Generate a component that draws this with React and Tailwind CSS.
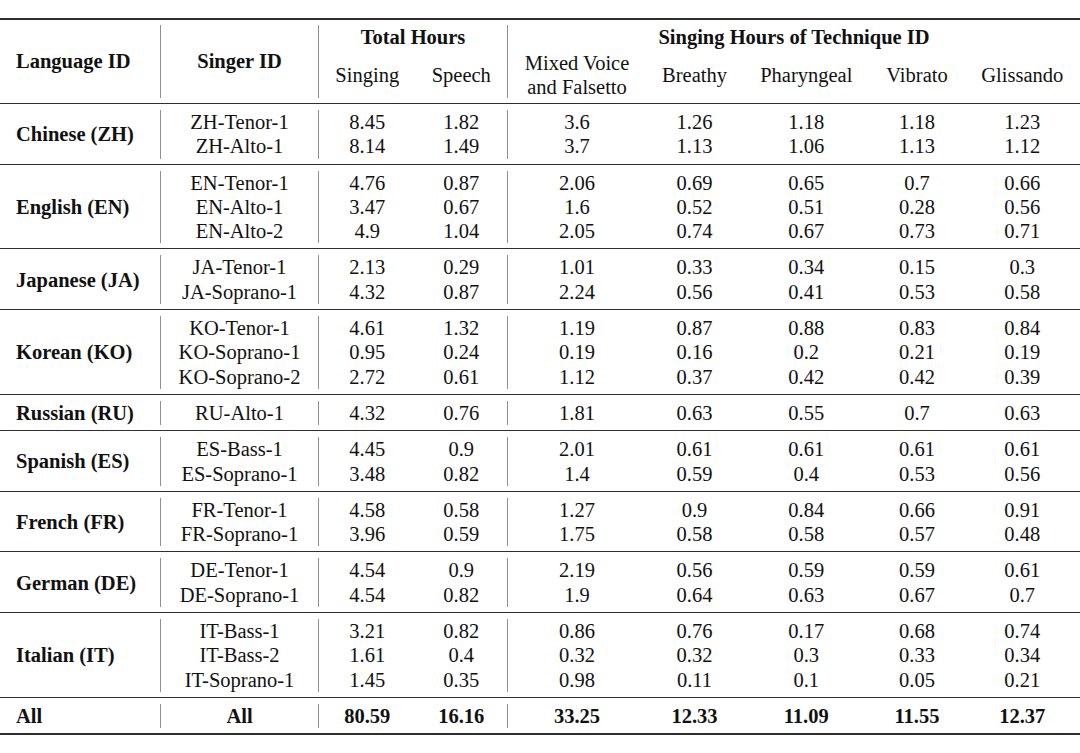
import React from "react";

// Hours per language / singer, split by technique
const groups = [
    {
        lang: "Chinese (ZH)",
        rows: [
            ["ZH-Tenor-1", "8.45", "1.82", "3.6", "1.26", "1.18", "1.18", "1.23"],
            ["ZH-Alto-1", "8.14", "1.49", "3.7", "1.13", "1.06", "1.13", "1.12"],
        ],
    },
    {
        lang: "English (EN)",
        rows: [
            ["EN-Tenor-1", "4.76", "0.87", "2.06", "0.69", "0.65", "0.7", "0.66"],
            ["EN-Alto-1", "3.47", "0.67", "1.6", "0.52", "0.51", "0.28", "0.56"],
            ["EN-Alto-2", "4.9", "1.04", "2.05", "0.74", "0.67", "0.73", "0.71"],
        ],
    },
    {
        lang: "Japanese (JA)",
        rows: [
            ["JA-Tenor-1", "2.13", "0.29", "1.01", "0.33", "0.34", "0.15", "0.3"],
            ["JA-Soprano-1", "4.32", "0.87", "2.24", "0.56", "0.41", "0.53", "0.58"],
        ],
    },
    {
        lang: "Korean (KO)",
        rows: [
            ["KO-Tenor-1", "4.61", "1.32", "1.19", "0.87", "0.88", "0.83", "0.84"],
            ["KO-Soprano-1", "0.95", "0.24", "0.19", "0.16", "0.2", "0.21", "0.19"],
            ["KO-Soprano-2", "2.72", "0.61", "1.12", "0.37", "0.42", "0.42", "0.39"],
        ],
    },
    {
        lang: "Russian (RU)",
        rows: [["RU-Alto-1", "4.32", "0.76", "1.81", "0.63", "0.55", "0.7", "0.63"]],
    },
    {
        lang: "Spanish (ES)",
        rows: [
            ["ES-Bass-1", "4.45", "0.9", "2.01", "0.61", "0.61", "0.61", "0.61"],
            ["ES-Soprano-1", "3.48", "0.82", "1.4", "0.59", "0.4", "0.53", "0.56"],
        ],
    },
    {
        lang: "French (FR)",
        rows: [
            ["FR-Tenor-1", "4.58", "0.58", "1.27", "0.9", "0.84", "0.66", "0.91"],
            ["FR-Soprano-1", "3.96", "0.59", "1.75", "0.58", "0.58", "0.57", "0.48"],
        ],
    },
    {
        lang: "German (DE)",
        rows: [
            ["DE-Tenor-1", "4.54", "0.9", "2.19", "0.56", "0.59", "0.59", "0.61"],
            ["DE-Soprano-1", "4.54", "0.82", "1.9", "0.64", "0.63", "0.67", "0.7"],
        ],
    },
    {
        lang: "Italian (IT)",
        rows: [
            ["IT-Bass-1", "3.21", "0.82", "0.86", "0.76", "0.17", "0.68", "0.74"],
            ["IT-Bass-2", "1.61", "0.4", "0.32", "0.32", "0.3", "0.33", "0.34"],
            ["IT-Soprano-1", "1.45", "0.35", "0.98", "0.11", "0.1", "0.05", "0.21"],
        ],
    },
    {
        lang: "All",
        bold: true,
        rows: [["All", "80.59", "16.16", "33.25", "12.33", "11.09", "11.55", "12.37"]],
    },
];

// widths of the data columns after the language column
const colClass = [
    "w-[158px] border-r border-[#8f8f8f]",
    "w-[96.5px]",
    "w-[92.5px] border-r border-[#8f8f8f]",
    "w-[138px]",
    "w-[97px]",
    "w-[126.5px]",
    "w-[95px]",
    "w-[115.5px]",
];

function Group({ lang, rows, bold }) {
    return (
        <div className="pt-[6px] pb-[5px]">
            <div className="flex">
                <div className="w-[161px] shrink-0 border-r border-[#8f8f8f] pl-4 flex items-center font-bold">
                    {lang}
                </div>
                {colClass.map((cls, j) => (
                    <div
                        key={j}
                        className={`${cls} shrink-0 flex flex-col text-center ${
                            bold ? "font-bold" : ""
                        }`}
                    >
                        {rows.map((r, i) => (
                            <div key={i} className="h-[24.3px]">
                                {r[j]}
                            </div>
                        ))}
                    </div>
                ))}
            </div>
        </div>
    );
}

export default function App() {
    return (
        <div className="min-h-screen w-[1080px] bg-white pt-[18px] text-[#111] text-[20.5px] leading-[24.3px] font-['Liberation_Serif','Times_New_Roman',serif]">
            <div className="h-[2px] bg-[#2e2e2e]" />

            <div className="pt-[5px] pb-[5px]">
                <div className="flex">
                    <div className="w-[161px] shrink-0 border-r border-[#8f8f8f] pl-4 flex items-center font-bold">
                        Language ID
                    </div>
                    <div className="w-[158px] shrink-0 border-r border-[#8f8f8f] flex items-center justify-center font-bold">
                        Singer ID
                    </div>
                    <div className="w-[189px] shrink-0 border-r border-[#8f8f8f] flex flex-col">
                        <div className="h-[25px] leading-[25px] text-center font-bold">
                            Total Hours
                        </div>
                        <div className="h-[48px] flex items-center pt-[2px]">
                            <div className="w-[96.5px] text-center">Singing</div>
                            <div className="w-[91.5px] text-center">Speech</div>
                        </div>
                    </div>
                    <div className="w-[572px] shrink-0 flex flex-col">
                        <div className="h-[25px] leading-[25px] text-center font-bold">
                            Singing Hours of Technique ID
                        </div>
                        <div className="h-[48px] flex items-center pt-[2px]">
                            <div className="w-[138px] text-center leading-[24px]">
                                Mixed Voice
                                <br />
                                and Falsetto
                            </div>
                            <div className="w-[97px] text-center">Breathy</div>
                            <div className="w-[126.5px] text-center">Pharyngeal</div>
                            <div className="w-[95px] text-center">Vibrato</div>
                            <div className="w-[115.5px] text-center">Glissando</div>
                        </div>
                    </div>
                </div>
            </div>

            {groups.map((g) => (
                <div key={g.lang}>
                    <div className="h-[1px] bg-[#2e2e2e]" />
                    <Group {...g} />
                </div>
            ))}

            <div className="h-[2px] bg-[#2e2e2e]" />
        </div>
    );
}
